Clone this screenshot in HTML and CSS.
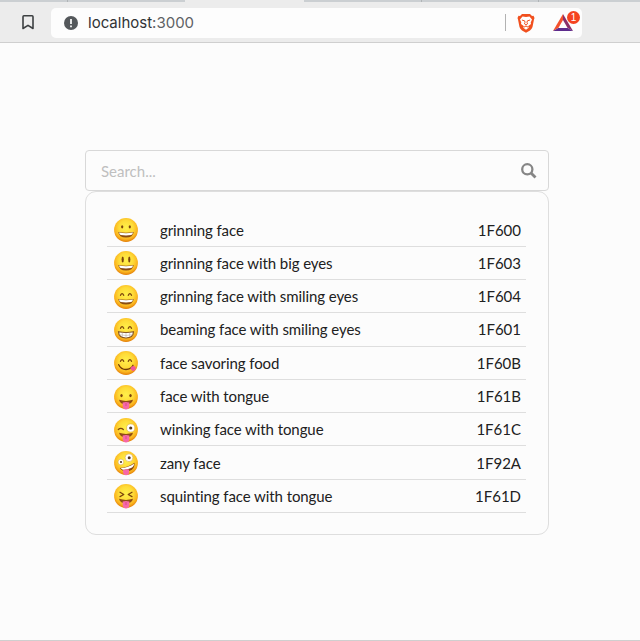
FILE: index.html
```html
<!DOCTYPE html>
<html lang="en">
<head>
<meta charset="utf-8">
<title>Emoji search</title>
<link rel="stylesheet" href="styles.css">
</head>
<body>
<svg width="0" height="0" class="defs" aria-hidden="true">
  <defs>
    <radialGradient id="skin" cx="50%" cy="40%" r="60%">
      <stop offset="0" stop-color="#fff04a"/>
      <stop offset=".5" stop-color="#fedb38"/>
      <stop offset=".8" stop-color="#fbb51f"/>
      <stop offset="1" stop-color="#e37f08"/>
    </radialGradient>
    <g id="head"><circle cx="12" cy="12" r="11.9" fill="url(#skin)"/></g>
    <g id="grin">
      <path d="M4.300 14Q12 15.500 19.700 14Q19 19.600 12 19.600Q5 19.600 4.300 14Z" fill="#8a4c10"/>
      <path d="M5 14.500Q12 15.900 19 14.500Q18.700 16.600 17.200 17Q12 17.900 6.800 17Q5.300 16.600 5 14.500Z" fill="#fff"/>
    </g>
    <g id="smile-eyes" fill="none" stroke="#7b430d" stroke-width="1.300" stroke-linecap="round">
      <path d="M6.500 10.300Q8.100 6.900 9.700 10.300M14.300 10.300Q15.900 6.900 17.500 10.300"/>
    </g>
    <g id="tongue">
      <path d="M5 14.800Q12 17 19 14.800Q18 19.300 12 19.300Q6 19.300 5 14.800Z" fill="#8f4a14"/>
      <path d="M8.700 17.500Q12 16.300 15.300 17.500V21Q15.100 24.400 12 24.400Q8.900 24.400 8.700 21Z" fill="#f768a7"/>
      <path d="M12 18V21" stroke="#cf4487" stroke-width=".8"/>
    </g>
  </defs>
</svg>
<header class="browser">
  <div class="tabs"><span class="tab tab-a"></span><span class="tab tab-b"></span><span class="tab tab-active"></span><span class="tab tab-c"></span><span class="tab tab-d"></span><span class="tab tab-e"></span></div>
  <div class="toolbar">
    <svg class="bookmark" viewBox="0 0 12 15"><path d="M1 1.700Q1 .8 1.900 .8H10.100Q11 .8 11 1.700V13.500L6 10.300L1 13.500Z" fill="none" stroke="#3d4042" stroke-width="1.600" stroke-linejoin="round"/></svg>
    <div class="address">
      <svg class="info" viewBox="0 0 14 14"><circle cx="7" cy="7" r="7" fill="#54585b"/><path d="M7 3V8M7 9.500V11.200" stroke="#fff" stroke-width="1.700"/></svg>
      <span class="url"><b>localhost</b>:3000</span>
      <span class="separator"></span>
      <svg class="brave" viewBox="0 0 18 20"><path d="M5 1H13L15 3L16.500 2.800L17.500 5L17 6.500L15.500 14Q15 16 13 17.400L9 19.800L5 17.400Q3 16 2.500 14L1 6.500L.5 5L1.500 2.800L3 3Z" fill="#f1501f"/><path d="M5.500 3.500L9 4L12.500 3.500L15 6.500L13.700 9.400L14 11L11 13.300L12 14.500L9 16.800L6 14.500L7 13.300L4 11L4.300 9.400L3 6.500Z" fill="#fff"/><path d="M4.900 7L7.700 7.900L8 9.400L7.500 10.900L9 12L10.500 10.900L10 9.400L10.300 7.900L13.100 7M6.700 14.300L9 13L11.300 14.300" fill="none" stroke="#f1501f" stroke-width="1"/></svg>
      <span class="rewards">
        <svg viewBox="0 0 20 17"><path d="M10 0L0 17L5.400 14L10 6Z" fill="#f4512c"/><path d="M10 0L20 17L14.600 14L10 6Z" fill="#8b2f68"/><path d="M0 17L5.400 14H14.600L20 17Z" fill="#5d2b8c"/></svg>
        <span class="badge">1</span>
      </span>
    </div>
  </div>
</header>
<main>
  <div class="search"><input type="text" placeholder="Search..." aria-label="Search">
    <svg class="glass" viewBox="0 0 16 16"><circle cx="6.300" cy="6.300" r="5.100" fill="none" stroke="#868686" stroke-width="2.300"/><path d="M10 10L14.500 14.500" stroke="#868686" stroke-width="2.800"/></svg>
  </div>
  <ul class="results">
    <li><svg class="emoji" viewBox="0 0 24 24"><use href="#head"/><ellipse cx="8.200" cy="8.800" rx="1.100" ry="1.600" fill="#7b430d"/><ellipse cx="15.800" cy="8.800" rx="1.100" ry="1.600" fill="#7b430d"/><use href="#grin"/></svg><span class="name">grinning face</span><span class="code">1F600</span></li>
    <li><svg class="emoji" viewBox="0 0 24 24"><use href="#head"/><ellipse cx="8.700" cy="8.400" rx="1.100" ry="3" fill="#7b430d"/><ellipse cx="15.300" cy="8.400" rx="1.100" ry="3" fill="#7b430d"/><use href="#grin"/></svg><span class="name">grinning face with big eyes</span><span class="code">1F603</span></li>
    <li><svg class="emoji" viewBox="0 0 24 24"><use href="#head"/><use href="#smile-eyes"/><use href="#grin"/></svg><span class="name">grinning face with smiling eyes</span><span class="code">1F604</span></li>
    <li><svg class="emoji" viewBox="0 0 24 24"><use href="#head"/><use href="#smile-eyes"/><path d="M4.500 13.800Q12 15.300 19.500 13.800Q19.200 20 12 20Q4.800 20 4.500 13.800Z" fill="#fff" stroke="#81501b" stroke-width="1.100"/><path d="M5 16.700Q12 18.200 19 16.700M8.300 14.500V19M12 14.800V20M15.700 14.500V19" fill="none" stroke="#b8afa2" stroke-width=".6"/></svg><span class="name">beaming face with smiling eyes</span><span class="code">1F601</span></li>
    <li><svg class="emoji" viewBox="0 0 24 24"><use href="#head"/><use href="#smile-eyes"/><path d="M4.700 13.700Q7 18.500 12 18.500Q17 18.500 19 14.300" fill="none" stroke="#713b08" stroke-width="1.300" stroke-linecap="round"/><path d="M16.300 17.300Q18 14.500 20.200 15.200Q22.600 16.200 21.300 18.800Q19.500 20.800 17.500 19.300Z" fill="#f1569b"/></svg><span class="name">face savoring food</span><span class="code">1F60B</span></li>
    <li><svg class="emoji" viewBox="0 0 24 24"><use href="#head"/><ellipse cx="7.500" cy="10.600" rx="1.200" ry="1.600" fill="#7b430d"/><ellipse cx="16.500" cy="10.600" rx="1.200" ry="1.600" fill="#7b430d"/><use href="#tongue"/></svg><span class="name">face with tongue</span><span class="code">1F61B</span></li>
    <li><svg class="emoji" viewBox="0 0 24 24"><use href="#head"/><path d="M4.300 11.500Q6.800 9.200 9.300 11.500" fill="none" stroke="#7b430d" stroke-width="1.300" stroke-linecap="round"/><circle cx="16.700" cy="10" r="4.100" fill="#fff" stroke="#d49b35" stroke-width=".5"/><circle cx="16.700" cy="10" r="1.600" fill="#53351d"/><use href="#tongue"/></svg><span class="name">winking face with tongue</span><span class="code">1F61C</span></li>
    <li><svg class="emoji" viewBox="0 0 24 24"><use href="#head"/><circle cx="6.900" cy="11" r="2.900" fill="#fff" stroke="#d49b35" stroke-width=".5"/><circle cx="7" cy="11" r="1.100" fill="#53351d"/><circle cx="15" cy="6.700" r="3.900" fill="#fff" stroke="#d49b35" stroke-width=".5"/><circle cx="15.200" cy="6.700" r="1.500" fill="#53351d"/><path d="M5.700 17Q14 16.500 20.500 11.700Q21 18.500 15 20Q9 21.500 5.700 17Z" fill="#854411"/><path d="M6.600 17.100Q14.500 16.700 20 12.800Q20 15.800 17 17Q12 19.300 8.300 18.500Z" fill="#fff"/><path d="M9 19.200Q12 17.800 15 18.400V21Q15 24.200 12 24.200Q9.600 24.200 9 21Z" fill="#f768a7"/></svg><span class="name">zany face</span><span class="code">1F92A</span></li>
    <li><svg class="emoji" viewBox="0 0 24 24"><use href="#head"/><path d="M6 8.200L9.800 10.500L6 12.600M18 8.200L14.200 10.500L18 12.600" fill="none" stroke="#7b430d" stroke-width="1.200" stroke-linecap="round" stroke-linejoin="round"/><use href="#tongue"/></svg><span class="name">squinting face with tongue</span><span class="code">1F61D</span></li>
  </ul>
</main>
</body>
</html>
```
FILE: styles.css
```css
* { box-sizing: border-box; }
body { margin: 0; height: 641px; display: flex; flex-direction: column; background: #fcfcfc; border-bottom: 1px solid #cfcfcf; font-family: Lato, sans-serif; color: #212121; overflow: hidden; }
.defs { position: absolute; }
.browser { height: 43px; background: #ececec; border-bottom: 1px solid #cfcfcf; }
.tabs { display: flex; height: 2px; }
.tab { background: #cbcfd2; border-right: 1px solid #b0b4b6; }
.tab-a { width: 68px; }
.tab-b { width: 117px; border: 0; }
.tab-active { width: 119px; background: #ececec; border: 0; }
.tab-c { width: 118px; }
.tab-d { width: 117px; }
.tab-e { flex: 1; border: 0; }
.toolbar { display: flex; align-items: center; height: 40px; padding: 1px 0 0 22px; }
.bookmark { width: 12px; height: 15px; }
.address { display: flex; align-items: center; width: 531px; height: 30px; margin-left: 17px; padding-left: 13px; background: #fdfdfd; border-radius: 5px; }
.info { width: 14px; height: 14px; }
.url { flex: 1; margin-left: 10px; font: 15px/30px Inter, sans-serif; color: #5d6164; }
.url b { font-weight: 400; color: #303335; }
.separator { width: 1px; height: 17px; background: #b2b2b2; }
.brave { width: 18px; height: 20px; margin-left: 11px; }
.rewards { position: relative; width: 20px; height: 17px; margin: 0 9px 0 18px; }
.rewards svg { display: block; width: 20px; height: 17px; }
.badge { position: absolute; left: 14px; top: -3px; width: 13px; height: 13px; border-radius: 50%; background: #f5431f; color: #fff; font: 10px/13px "Liberation Sans", sans-serif; text-align: center; }
main { width: 463.5px; margin: 107px 0 0 85px; }
.search { display: flex; align-items: center; height: 41px; padding: 0 11px 0 15px; border: 1px solid #d8d8d8; border-radius: 4px; }
.search input { flex: 1; min-width: 0; padding: 0; border: 0; outline: 0; background: none; font: 15px/20px Lato, sans-serif; }
.search input::placeholder { color: #bfbfbf; opacity: 1; }
.glass { width: 16px; height: 16px; }
.results { height: 344px; margin: 0; padding: 21.4px 21.500px 0 21px; border: 1px solid #dedede; border-radius: 11px; list-style: none; font-size: 15px; }
.results li { display: flex; align-items: center; height: 33.3px; padding: 0 5px 0 6.5px; border-bottom: 1px solid #dedede; }
.emoji { width: 24px; height: 24px; margin-top: 1px; overflow: visible; }
.name { flex: 1; margin-left: 22.5px; letter-spacing: -0.08px; }
```
